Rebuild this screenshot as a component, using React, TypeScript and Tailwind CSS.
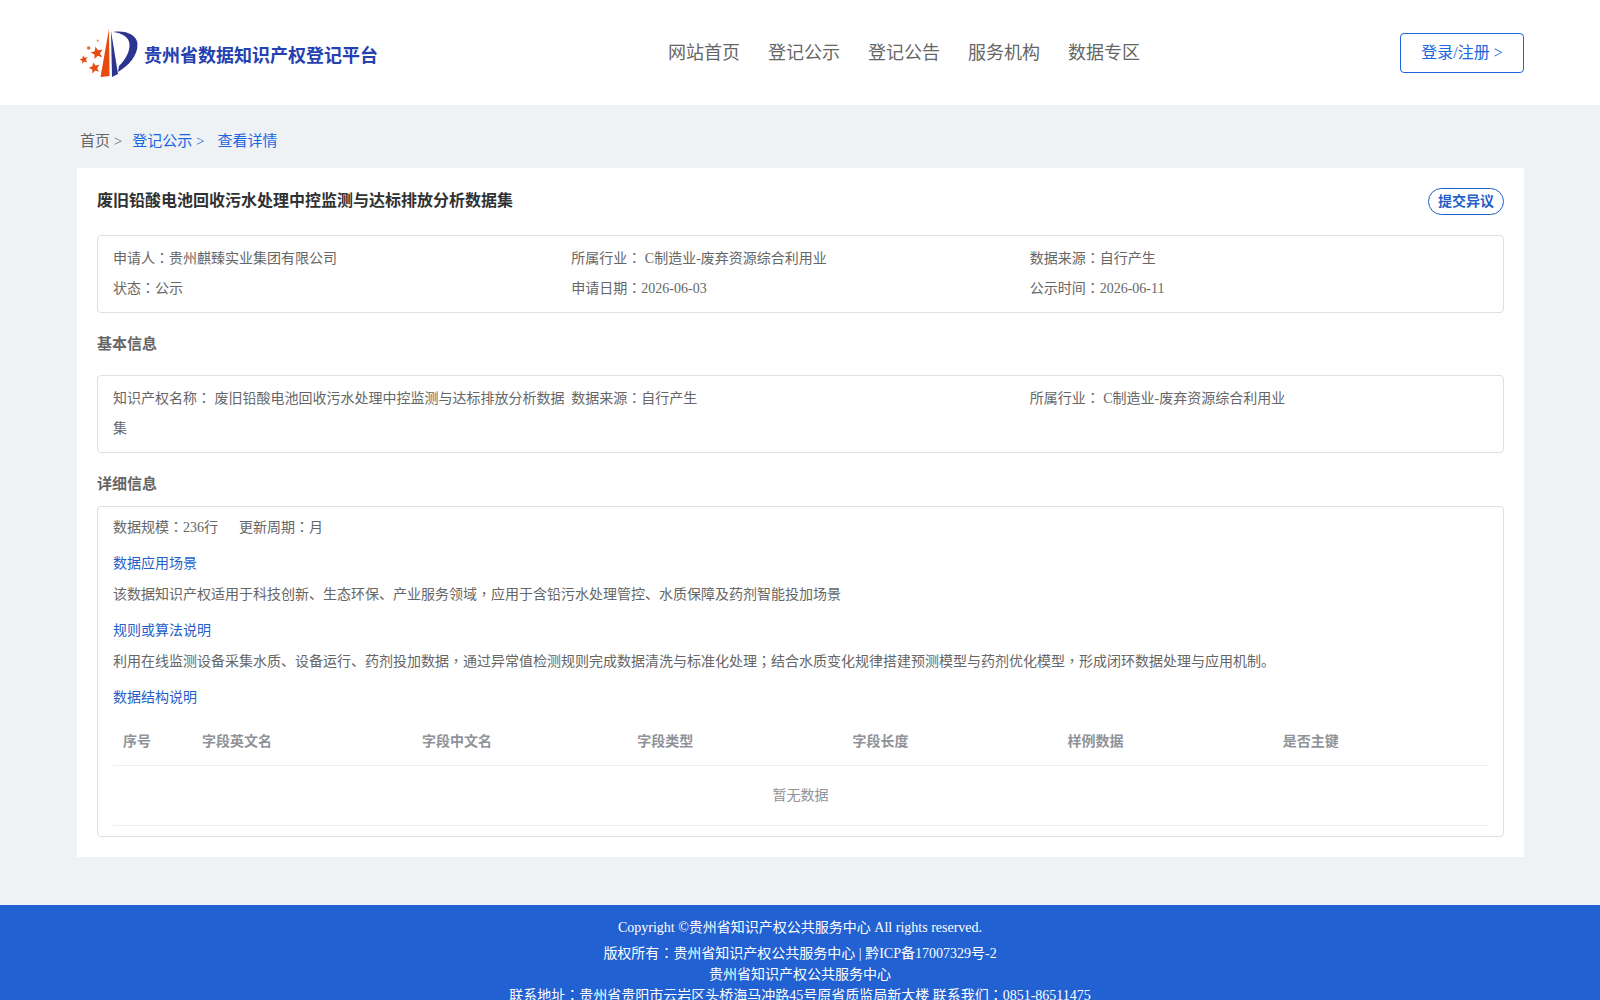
import React from 'react';

const infoFont = { fontFamily: '"Liberation Serif", "Noto Sans CJK SC", serif' };

// the reference centres these marks in their cell, the TC cut of the font does too
const P = ({ c = '：' }: { c?: string }) => (
  <span className="font-['Noto_Sans_CJK_TC'] leading-[0]">{c}</span>
);

const starPoints = (cx: number, cy: number, r: number) =>
  Array.from({ length: 10 }, (_, i) => {
    const rad = i % 2 === 0 ? r : r * 0.45;
    const a = -Math.PI / 2 + (i * Math.PI) / 5 - 0.25;
    return `${cx + rad * Math.cos(a)},${cy + rad * Math.sin(a)}`;
  }).join(' ');

const Logo = () => (
  <svg width="60" height="52" viewBox="0 0 60 52" className="mb-[3px] shrink-0">
    <path d="M20.5 49 L29 1 L29.500 48 Z" fill="#e8490f" />
    <path d="M31 3 L32 49 L38 46 Z" fill="#2b3590" />
    <path d="M33 4 C46 2 57 7 57.500 16 C58 28 48 38 38 44 L39 38 C45 32 50 24 49.500 16 C49 9 42 5 33 4 Z" fill="#2b3590" />
    <polygon points={starPoints(17, 25, 6.5)} fill="#e8490f" />
    <polygon points={starPoints(14.5, 40, 5.8)} fill="#e8490f" />
    <polygon points={starPoints(3.9, 31.700, 4.4)} fill="#e8490f" />
    <circle cx="8.700" cy="20" r="1.800" fill="#ee6a3a" />
    <circle cx="17.700" cy="12.700" r="1.100" fill="#f0906a" />
  </svg>
);

const navItems = ['网站首页', '登记公示', '登记公告', '服务机构', '数据专区'];
const columns = ['序号', '字段英文名', '字段中文名', '字段类型', '字段长度', '样例数据', '是否主键'];

export default function App() {
  return (
    <div className="min-h-screen bg-[#eff2f5] text-sm text-[#666666]" style={infoFont}>
      <header className="h-[105px] bg-white">
        <div className="mx-[80px] flex h-full items-center">
          <div className="flex w-[588px] items-center gap-[4px] pt-[6px]">
            <Logo />
            <span className="text-lg font-bold text-[#2540b0]">贵州省数据知识产权登记平台</span>
          </div>
          <nav className="flex gap-[28px] pt-[1px] text-lg text-[#666666]">
            {navItems.map((item) => (
              <a key={item}>{item}</a>
            ))}
          </nav>
          <button className="ml-auto mr-[-4px] h-[40px] w-[124px] rounded border border-[#1a66e0] bg-white pt-[1px] text-base text-[#1a66e0]">
            登录/注册 &gt;
          </button>
        </div>
      </header>

      <div className="mx-[80px] flex h-[63px] items-center pt-[11px] text-[15px]">
        <span>首页 &gt;</span>
        <span className="ml-[10px] text-[#1a66e0]">登记公示 &gt;</span>
        <span className="ml-[13px] text-[#1a66e0]">查看详情</span>
      </div>

      <main className="ml-[77px] mr-[76px] bg-white px-[20px] pb-[20px] pt-[20px]">
        <div className="flex items-start justify-between">
          <h1 className="pt-[1px] text-base font-bold text-[#303133]">废旧铅酸电池回收污水处理中控监测与达标排放分析数据集</h1>
          <button className="h-[27px] w-[76px] rounded-[14px] border border-[#1f5fc9] text-sm font-bold text-[#1f5fc9]">
            提交异议
          </button>
        </div>

        <div className="mt-[20px] grid h-[78px] grid-cols-3 content-center rounded border border-[#dcdfe6] px-[15px] leading-[30px]">
          <div>申请人<P />贵州麒臻实业集团有限公司</div>
          <div>所属行业<P /> C制造业-废弃资源综合利用业</div>
          <div>数据来源<P />自行产生</div>
          <div>状态<P />公示</div>
          <div>申请日期<P />2026-06-03</div>
          <div>公示时间<P />2026-06-11</div>
        </div>

        <h2 className="mt-[21px] text-[15px] font-bold leading-[20px]">基本信息</h2>

        <div className="mt-[21px] grid h-[78px] grid-cols-3 content-center rounded border border-[#dcdfe6] px-[15px] leading-[30px]">
          <div>知识产权名称<P /> 废旧铅酸电池回收污水处理中控监测与达标排放分析数据集</div>
          <div>数据来源<P />自行产生</div>
          <div>所属行业<P /> C制造业-废弃资源综合利用业</div>
        </div>

        <h2 className="mt-[21px] text-[15px] font-bold leading-[20px]">详细信息</h2>

        <div className="mt-[12px] h-[331px] rounded border border-[#dcdfe6] px-[15px] pt-[6px] leading-[30px]">
          <div className="flex gap-[21px]">
            <span>数据规模<P />236行</span>
            <span>更新周期<P />月</span>
          </div>
          <div className="mt-[6px] text-[#1f5fc9]">数据应用场景</div>
          <div className="mt-[1px]">该数据知识产权适用于科技创新、生态环保、产业服务领域<P c="，" />应用于含铅污水处理管控、水质保障及药剂智能投加场景</div>
          <div className="mt-[6px] text-[#1f5fc9]">规则或算法说明</div>
          <div className="mt-[1px]">利用在线监测设备采集水质、设备运行、药剂投加数据<P c="，" />通过异常值检测规则完成数据清洗与标准化处理<P c="；" />结合水质变化规律搭建预测模型与药剂优化模型<P c="，" />形成闭环数据处理与应用机制。</div>
          <div className="mt-[6px] text-[#1f5fc9]">数据结构说明</div>

          <div className="mt-[5px] grid h-[48px] grid-cols-[79px_220px_1fr_1fr_1fr_1fr_1fr] items-center border-b border-[#ebeef5] font-bold text-[#909399]">
            {columns.map((col) => (
              <div key={col} className="px-[10px]">{col}</div>
            ))}
          </div>
          <div className="flex h-[60px] items-center justify-center border-b border-[#ebeef5] text-[#909399]">暂无数据</div>
        </div>
      </main>

      <footer className="mt-[48px] bg-[#2161d1] pb-[10px] pt-[12px] text-center text-white">
        <div className="leading-[22px]">Copyright ©贵州省知识产权公共服务中心 All rights reserved.</div>
        <div className="mt-[4px] leading-[21px]">版权所有<P />贵州省知识产权公共服务中心 | 黔ICP备17007329号-2</div>
        <div className="leading-[21px]">贵州省知识产权公共服务中心</div>
        <div className="leading-[21px]">联系地址<P />贵州省贵阳市云岩区头桥海马冲路45号原省质监局新大楼 联系我们<P />0851-86511475</div>
      </footer>
    </div>
  );
}
